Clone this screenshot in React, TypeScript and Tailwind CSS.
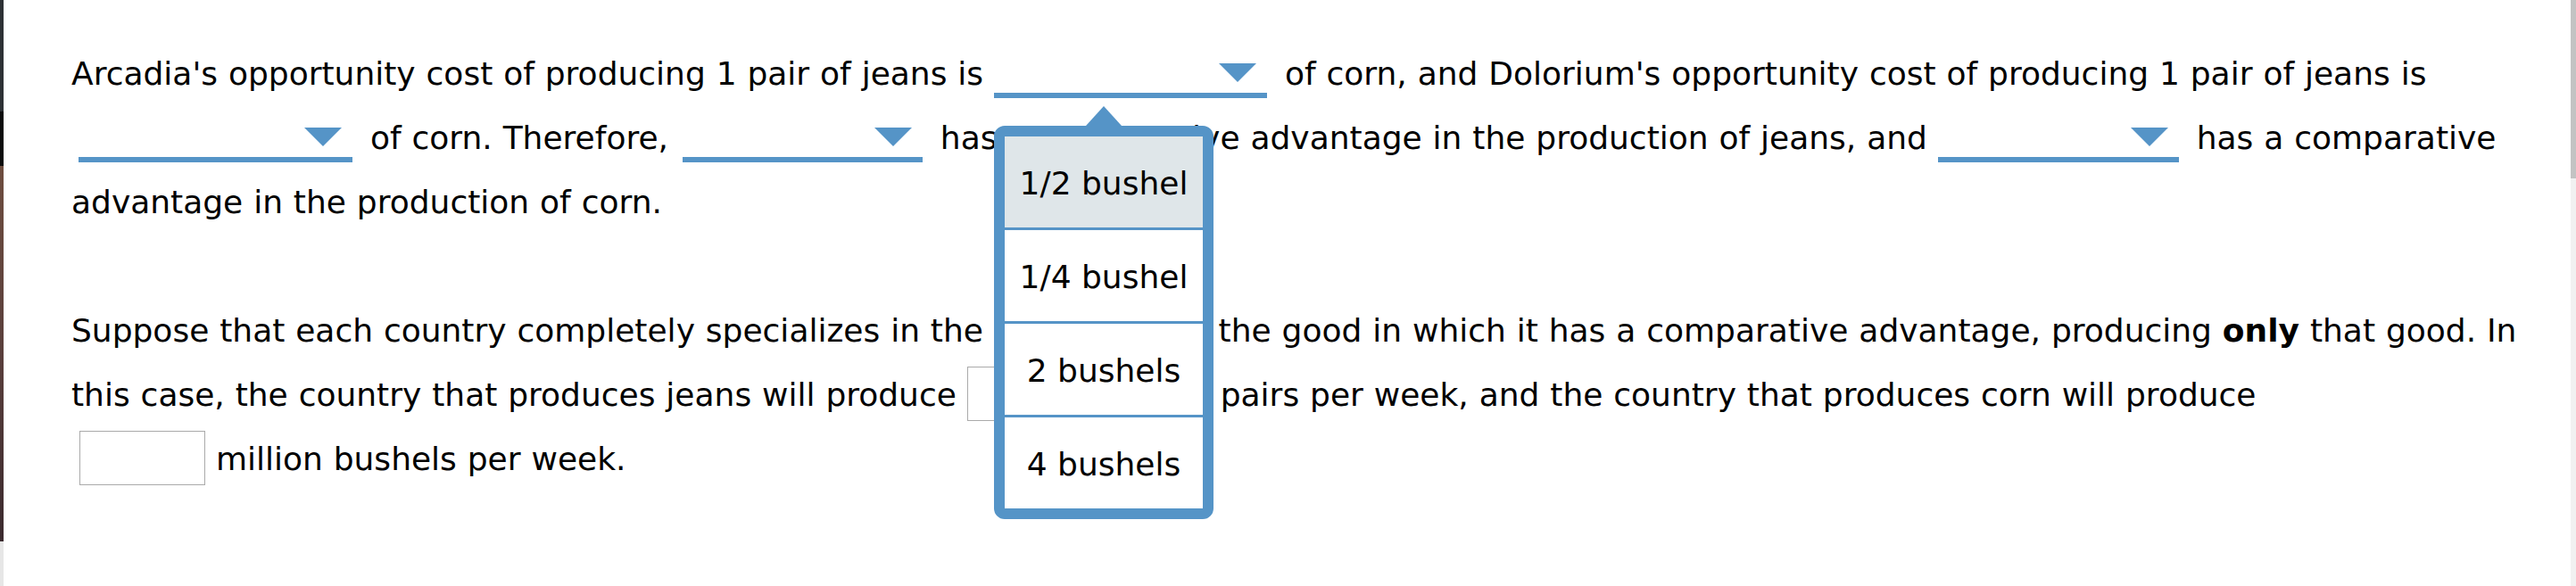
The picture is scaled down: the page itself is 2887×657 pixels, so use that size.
import type { ReactNode } from "react";

const options = ["1/2 bushel", "1/4 bushel", "2 bushels", "4 bushels"];

function Arrow() {
  return (
    <svg width="42" height="21" viewBox="0 0 42 21" className="ml-auto mr-[12px] block">
      <polygon points="0,0 42,0 21,21" fill="#5594c7" />
    </svg>
  );
}

function Dropdown({ className, children }: { className: string; children?: ReactNode }) {
  return (
    <span
      className={`relative inline-block h-[39px] border-b-[6px] border-[#5594c7] align-[-15px] ${className}`}
    >
      <Arrow />
      {children}
    </span>
  );
}

function Menu() {
  return (
    <span className="absolute left-0 top-[48px] z-10 flex w-[246px] flex-col items-center [word-spacing:0px]">
      <svg width="40" height="22" viewBox="0 0 40 22" className="block">
        <polygon points="0,22 20,0 40,22" fill="#5594c7" />
      </svg>
      <span className="flex w-full flex-col gap-[3px] rounded-[12px] border-[12px] border-[#5594c7] bg-[#5594c7]">
        {options.map((o, i) => (
          <span
            key={o}
            className={`flex h-[102px] items-center justify-center pt-[3px] leading-normal ${
              i === 0 ? "bg-[#dfe6e9]" : "bg-white"
            }`}
          >
            {o}
          </span>
        ))}
      </span>
    </span>
  );
}

function Blank({ className }: { className: string }) {
  return (
    <span
      className={`inline-block h-[61px] border border-[#aaaaaa] bg-white align-[-17px] ${className}`}
    />
  );
}

export default function App() {
  return (
    <div className="flex h-[657px] w-full overflow-hidden bg-white font-[Verdana,DejaVu_Sans,sans-serif] text-[36px] leading-[72px] text-black [word-spacing:0.45px]">
      <div className="flex w-[4px] flex-col">
        <div className="h-[125px] bg-[#2d3135]" />
        <div className="h-[61px] bg-[#0b0b0b]" />
        <div className="h-[421px] bg-gradient-to-b from-[#6e4d3f] via-[#5a3f3c] to-[#3b2a2e]" />
        <div className="flex-1 bg-[#e6e6e6]" />
      </div>

      <div className="flex-1 whitespace-nowrap pl-[76px] pt-[47px]">
        <div>
          Arcadia's opportunity cost of producing 1 pair of jeans is{" "}
          <Dropdown className="mr-[8px] w-[306px]">
            <Menu />
          </Dropdown>{" "}
          of corn, and Dolorium's opportunity cost of producing 1 pair of jeans is
          <br />
          <Dropdown className="ml-[8px] mr-[8px] w-[307px]" /> of corn. Therefore,{" "}
          <Dropdown className="ml-[4px] mr-[8px] w-[269px]" /> has a comparative advantage
          in the production of jeans, and <Dropdown className="mr-[8px] w-[270px]" /> has a
          comparative
          <br />
          advantage in the production of corn.
        </div>

        <div className="mt-[72px]">
          Suppose that each country completely specializes in the production of the good in
          which it has a comparative advantage, producing <b>only</b> that good. In
          <br />
          this case, the country that produces jeans will produce{" "}
          <Blank className="w-[272px]" /> pairs per week, and the country that produces corn
          will produce
          <br />
          <Blank className="ml-[9px] w-[141px]" /> million bushels per week.
        </div>
      </div>

      <div className="w-[6px] bg-[#f1f1f1]">
        <div className="h-[200px] bg-[#c3c3c3]" />
      </div>
    </div>
  );
}
